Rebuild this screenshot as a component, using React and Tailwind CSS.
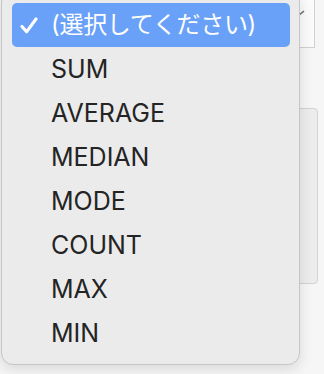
import React from "react";

const OPTIONS = ["SUM", "AVERAGE", "MEDIAN", "MODE", "COUNT", "MAX", "MIN"];

const Check = () => (
  <svg width="18" height="17" viewBox="0 0 18 17" fill="none">
    <path d="M2 9.4 L6.6 14.8 L16 2" stroke="#ffffff" strokeWidth="3.1" strokeLinecap="round" strokeLinejoin="round" />
  </svg>
);

const MenuRow = ({ label, selected }) => (
  <div
    className={`flex items-center h-[44px] rounded-[5px] ${selected ? "bg-[#69a0f8] text-white" : "text-[#242424]"}`}
  >
    <div className="w-[39px] pl-[8px] flex items-center">{selected && <Check />}</div>
    <span className={`leading-none ${selected ? "text-[24px] tracking-[-0.3px]" : "text-[25px]"}`}>{label}</span>
  </div>
);

export default function App() {
  return (
    <div
      className="relative w-[324px] h-[374px] overflow-hidden bg-[#f6f6f6]"
      style={{ fontFamily: 'Inter, "Noto Sans CJK JP", sans-serif' }}
    >
      {/* page behind the menu */}
      <div className="flex flex-col items-end">
        <div className="mt-[-10px] mr-[9px] w-[260px] h-[58px] bg-[#fbfbfb] border border-[#d0d0d0] flex items-center justify-end pr-[9px]">
          <svg width="17" height="8" viewBox="0 0 17 8" fill="none" className="mb-[10px]">
            <path d="M1 1 L8.5 7 L16 1" stroke="#6b6b6b" strokeWidth="1.6" />
          </svg>
        </div>
        <div className="mt-[60px] mr-[6px] w-[260px] h-[176px] bg-[#ededed] border border-[#d3d3d3] rounded-[4px]" />
      </div>

      {/* dropdown menu */}
      <div className="absolute left-[1px] top-[-10px] w-[299px] h-[375px] bg-[#ebebeb] border border-[#c6c6c6] rounded-[12px] shadow-[0_4px_14px_rgba(0,0,0,0.12)] pt-[12px] pl-[10px] pr-[9px]">
        <MenuRow label="(選択してください)" selected />
        {OPTIONS.map((o) => (
          <MenuRow key={o} label={o} />
        ))}
      </div>
    </div>
  );
}
